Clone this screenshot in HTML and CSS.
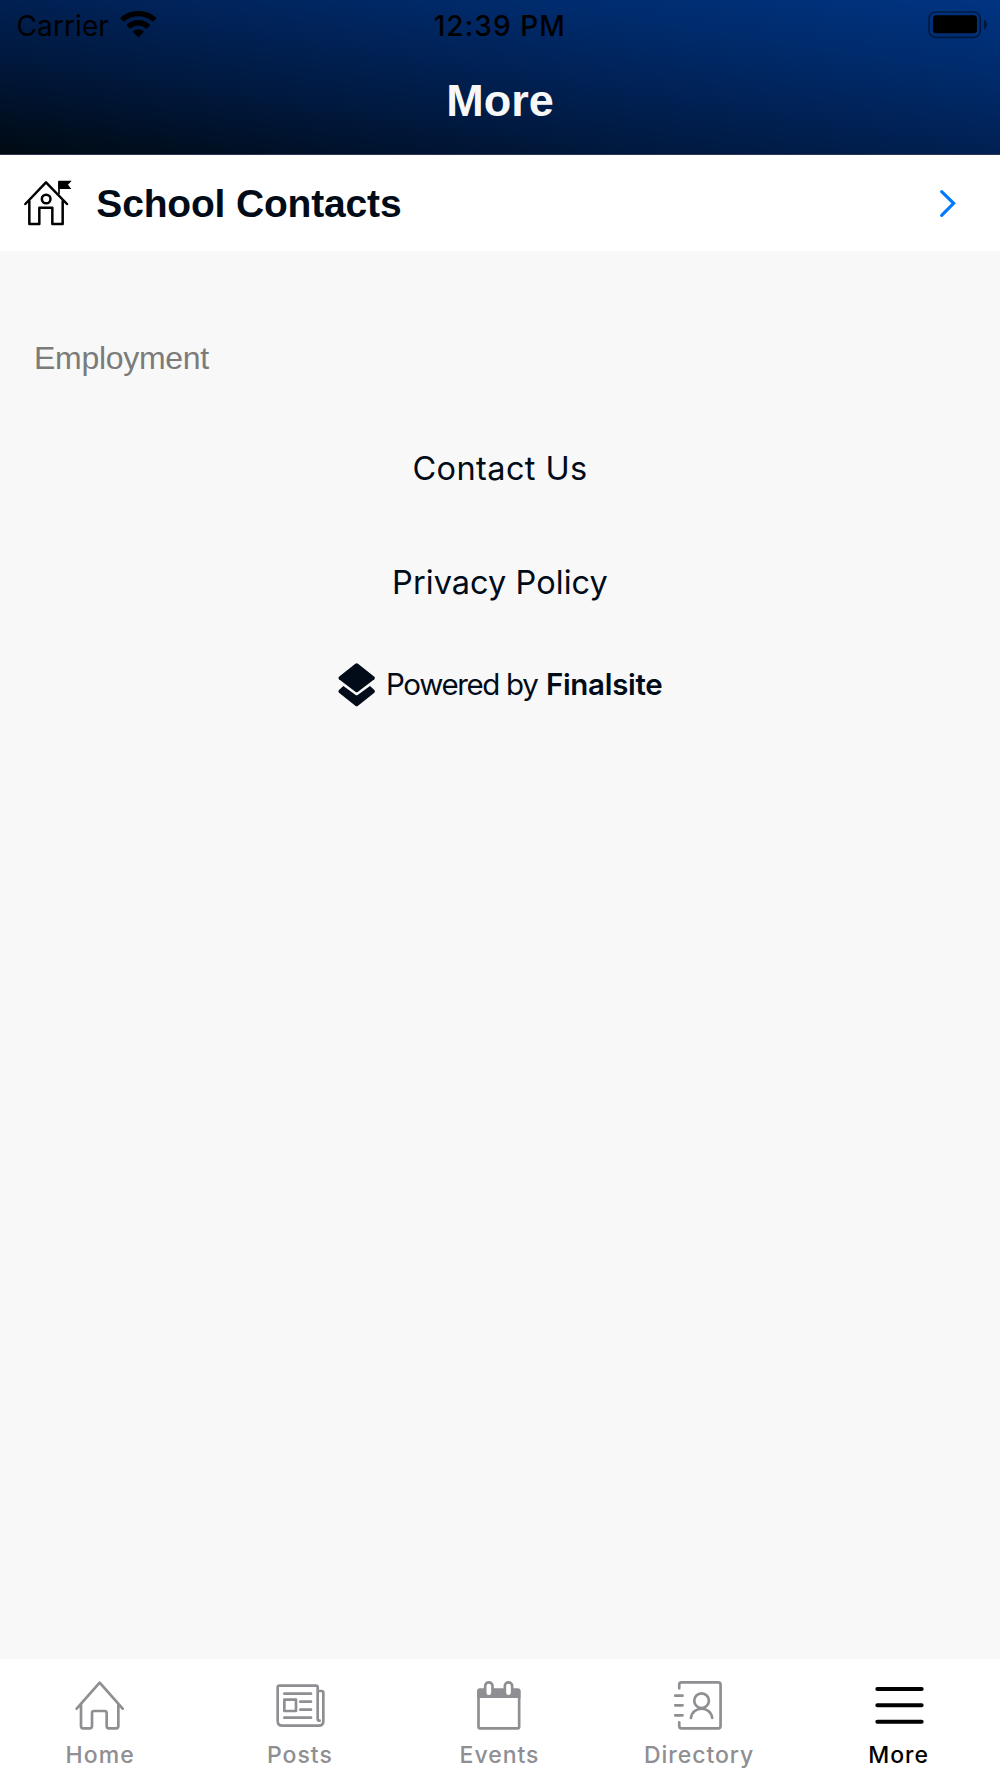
FILE: index.html
```
<!DOCTYPE html>
<html lang="en">
<head>
<meta charset="utf-8">
<title>More</title>
<link rel="stylesheet" href="styles.css">
</head>
<body>
<div class="screen">
  <header class="header">
    <div class="status">
      <div class="status-left">
        <span class="carrier">Carrier</span>
        <svg class="wifi" viewBox="361 32 110 79" aria-hidden="true">
          <path d="M361 54C391 25 441 25 471 54L460 64Q416 31 372 64Z"/>
          <path d="M380 74C400 54 432 54 452 74L441 85Q416 66 391 85Z"/>
          <path d="M399 94Q416 80 433 94L416 111Z"/>
        </svg>
      </div>
      <span class="time">12:39 PM</span>
      <div class="status-right">
        <svg class="battery" viewBox="774 32 178 82" aria-hidden="true">
          <rect x="777" y="35" width="154" height="76" rx="20" fill="none" stroke="#000" stroke-width="5" opacity=".45"/>
          <rect x="789" y="45" width="132" height="54" rx="10"/>
          <path d="M942 58Q951 62 951 72.500T942 88Z" opacity=".5"/>
        </svg>
      </div>
    </div>
    <h1 class="title">More</h1>
  </header>

  <main class="content">
    <a class="row">
      <svg class="school" viewBox="73 539 144 138" aria-hidden="true">
        <g fill="none" stroke="#000" stroke-width="7.500" stroke-linecap="round" stroke-linejoin="round">
          <path d="M77 611L139 546L202 611"/>
          <path d="M89 603V671H119V622H158V671H189V603"/>
          <circle cx="139.500" cy="596" r="13"/>
          <path d="M178 580V545" stroke-width="5"/>
        </g>
        <path d="M176 541H216L205 553L215 566H176Z"/>
      </svg>
      <span class="row-label">School Contacts</span>
      <svg class="chevron" viewBox="809 570 46 81" aria-hidden="true">
        <path d="M814 575L850 610L814 646" fill="none" stroke="#007aff" stroke-width="9.500" stroke-linecap="round"/>
      </svg>
    </a>
    <h2 class="section">Employment</h2>
    <nav class="links">
      <a class="link contact">Contact Us</a>
      <a class="link privacy">Privacy Policy</a>
    </nav>
    <div class="powered">
      <svg class="logo" viewBox="54 699 111 131" aria-hidden="true">
        <path d="M106 701Q110 698 114 701L163 740Q167 744 163 748L114 785Q110 788 106 785L57 748Q53 744 57 740Z"/>
        <path d="M70 768L106 794Q110 797 114 794L150 768L163 780Q167 784 163 788L114 827Q110 830 106 827L57 788Q53 784 57 780Z"/>
      </svg>
      <span class="powered-by">Powered by</span>
      <strong class="brand">Finalsite</strong>
    </div>
  </main>

  <nav class="tabs">
    <a class="tab home">
      <svg class="icon" viewBox="229 123 144 147" aria-hidden="true">
        <path d="M231 206L300 128L369 206M244 195V258Q244 265 251 265H270Q277 265 277 258V219Q277 213 283 213H315Q321 213 321 219V258Q321 265 328 265H349Q356 265 356 258V195"/>
      </svg>
      <span>Home</span>
    </a>
    <a class="tab">
      <svg class="icon" viewBox="828 123 144 147" aria-hidden="true">
        <path d="M953 153V142Q953 137 948 137H838Q833 137 833 142V243Q833 257 847 257H956Q970 257 970 243V158Q970 153 965 153H953V236Q953 242 959 242"/>
        <path d="M853 161H933M901 185H933M901 209H933M853 233H933M853 179H888V213H853Z"/>
      </svg>
      <span>Posts</span>
    </a>
    <a class="tab">
      <svg class="icon" viewBox="406.500 123 144 147" aria-hidden="true">
        <path d="M417 153V260Q417 265 422 265H534Q539 265 539 260V153Z"/>
        <path class="solid" d="M413 174V153Q413 145 421 145H535Q543 145 543 153V174Z"/>
        <rect class="ring" x="437" y="127" width="22" height="42" rx="11"/>
        <rect class="ring" x="496" y="127" width="22" height="42" rx="11"/>
      </svg>
      <span>Events</span>
    </a>
    <a class="tab">
      <svg class="icon" viewBox="15.300 123 144 147" aria-hidden="true">
        <path d="M28 145V134Q28 127 35 127H145Q152 127 152 134V258Q152 265 145 265H35Q28 265 28 258V247M16 167H38M16 196H38M16 226H38"/>
        <circle cx="95" cy="182" r="22"/>
        <path d="M63 234C68 197 122 197 127 234"/>
      </svg>
      <span>Directory</span>
    </a>
    <a class="tab active">
      <svg class="icon menu" viewBox="614 123 144 147" aria-hidden="true">
        <path d="M621 147H754M621 196H754M621 245H754"/>
      </svg>
      <span>More</span>
    </a>
  </nav>
</div>
</body>
</html>
```
FILE: styles.css
```
* { box-sizing: border-box; }
body { margin: 0; }
svg { display: block; overflow: visible; flex: none; }

.screen {
  display: flex;
  flex-direction: column;
  width: 1000px;
  height: 1778px;
  background: #f8f8f8;
  color: #020b18;
  font-family: Inter, sans-serif;
}

.header {
  height: 155px;
  border-bottom: 1px solid #2c3455;
  background: linear-gradient(to top right, #000a12, #001534 24%, #002052 50%, #002b6c 75%, #003482);
}
.status {
  display: grid;
  grid-template-columns: 1fr auto 1fr;
  height: 50px;
  padding: 0 13px 0 16.500px;
  color: #000;
  font-size: 28px;
  line-height: 52px;
}
.status-left { display: flex; gap: 11px; }
.carrier { letter-spacing: .1px; }
.wifi { width: 36.700px; height: 26.300px; margin-top: 10.700px; }
.time { margin: 0 2px 0 -2px; font-weight: 500; letter-spacing: 1.080px; }
.status-right { display: flex; justify-content: flex-end; }
.battery { width: 59.300px; height: 27.300px; margin-top: 10.700px; }
.title {
  margin: 0;
  color: #f7f7f7;
  font: bold 45px/101px "Liberation Sans", sans-serif;
  text-align: center;
}

.content { flex: 1; }
.row {
  display: flex;
  align-items: center;
  height: 96px;
  padding: 0 45px 0 24.300px;
  background: #fff;
}
.school { width: 48px; height: 46px; }
.row-label {
  flex: 1;
  margin-left: 24px;
  padding-top: 2px;
  font: bold 39px/94px "Liberation Sans", sans-serif;
  letter-spacing: -.17px;
}
.chevron { width: 15.300px; height: 27px; }
.section {
  margin: 77px 0 0 34px;
  color: #7b7b7b;
  font: 32px/60px "Liberation Sans", sans-serif;
  letter-spacing: -.3px;
}
.links {
  display: flex;
  flex-direction: column;
  align-items: center;
  padding-top: 24px;
}
.link { font-size: 32.500px; line-height: 113.500px; }
.contact { letter-spacing: .4px; }
.privacy { letter-spacing: .05px; }
.powered {
  display: flex;
  align-items: center;
  height: 91px;
  padding-left: 338px;
  font-size: 29.500px;
  line-height: 40px;
}
.logo { width: 37px; height: 43.700px; margin-right: 11px; fill: #020b18; }
.powered-by { margin-top: -2px; letter-spacing: -1.350px; }
.brand { margin: -2px 0 0 8.500px; font-weight: 600; letter-spacing: -.3px; }

.tabs {
  display: flex;
  height: 119px;
  padding: 22px 1.500px 0 .5px;
  background: #fff;
}
.tab {
  display: flex;
  flex: 1;
  flex-direction: column;
  align-items: center;
  gap: 10px;
  color: #8e8e93;
  font-size: 23px;
  font-weight: 500;
  line-height: 31px;
  letter-spacing: .97px;
}
.home { letter-spacing: 1.100px; }
.active { color: #000; }
.icon {
  width: 48px;
  height: 49px;
  fill: none;
  stroke: currentColor;
  stroke-width: 8;
  stroke-linecap: round;
  stroke-linejoin: round;
}
.menu { stroke-width: 12; }
.solid { fill: currentColor; stroke: none; }
.ring { fill: #fff; }
```
